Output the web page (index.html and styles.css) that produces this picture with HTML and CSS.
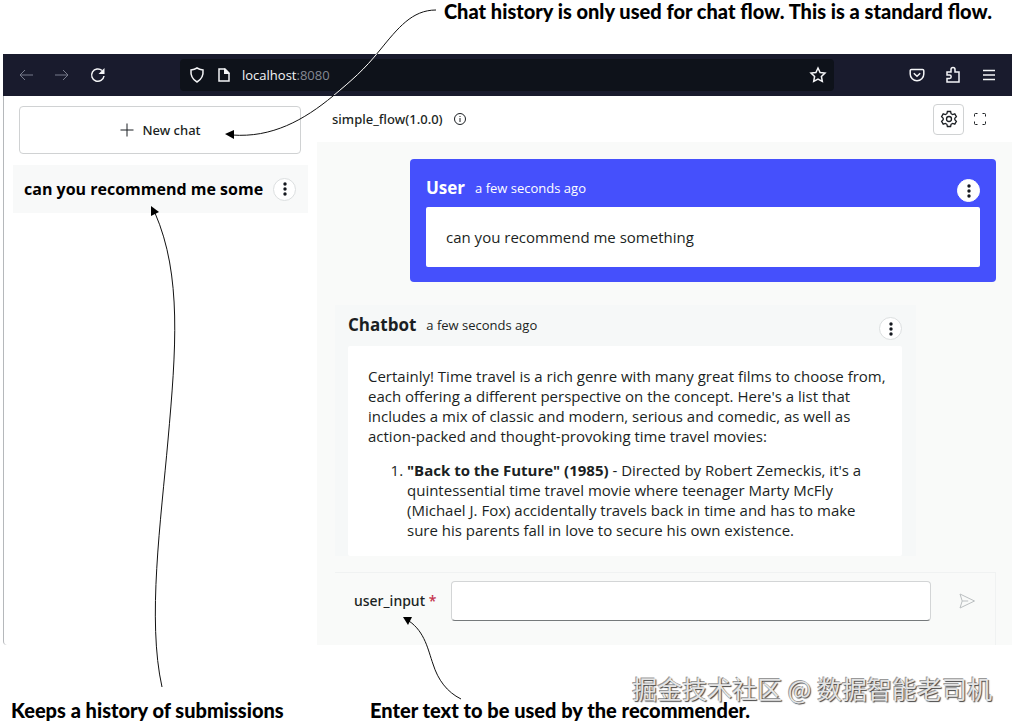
FILE: index.html
```html
<!DOCTYPE html>
<html lang="en">
<head>
    <meta charset="UTF-8">
    <meta name="viewport" content="width=device-width, initial-scale=1.0">
    <title>simple_flow</title>
    <link rel="stylesheet" href="styles.css">
</head>
<body>
    <div class="figure">
        <p class="caption caption-top">Chat history is only used for chat flow. This is a standard flow.</p>

        <div class="window">
            <div class="toolbar">
                <div class="nav-buttons">
                    <button class="tool dim" aria-label="Back"><svg width="18" height="18" viewBox="0 0 18 18"><path d="M16 9H3M8 4L3 9l5 5"/></svg></button>
                    <button class="tool dim" aria-label="Forward"><svg width="18" height="18" viewBox="0 0 18 18"><path d="M2 9h13M10 4l5 5-5 5"/></svg></button>
                    <button class="tool" aria-label="Reload"><svg width="18" height="18" viewBox="0 0 18 18"><path class="thick" d="M15 10a6.2 6.2 0 1 1-2-5.500"/><path class="solid" d="M15.500 2v6h-6z"/></svg></button>
                </div>
                <div class="address">
                    <svg width="18" height="18" viewBox="0 0 18 18"><path class="thick" d="M9 2c2 1.300 4 1.700 6 1.900C15.500 9 13.500 13.500 9 16 4.500 13.500 2.500 9 3 3.900 5 3.700 7 3.300 9 2z"/></svg>
                    <svg width="18" height="18" viewBox="0 0 18 18"><path class="thick" d="M4 3h6l4 4v8H4z"/><path class="solid" d="M9 2l6 6H9z"/></svg>
                    <span class="url">localhost<span class="port">:8080</span></span>
                    <svg class="star" width="18" height="18" viewBox="0 0 18 18"><path class="thick" d="M9 2l2.100 4.500 4.900.6-3.600 3.400.9 4.900L9 13l-4.300 2.400.9-4.900L2 7.100l4.900-.6z"/></svg>
                </div>
                <div class="tool-buttons">
                    <button class="tool" aria-label="Pocket"><svg width="18" height="18" viewBox="0 0 18 18"><path class="thick" d="M3.500 3.500h11a1.300 1.300 0 0 1 1.300 1.300V8a6.800 6.800 0 0 1-13.600 0V4.800a1.300 1.300 0 0 1 1.300-1.300z"/><path class="thick" d="M5.800 7.300L9 10.300l3.200-3"/></svg></button>
                    <button class="tool" aria-label="Extensions"><svg width="18" height="18" viewBox="0 0 18 18"><path class="thick" d="M3 6h4V3.500a2 2 0 0 1 4 0V6h4v10H3v-3.500h2.500a1.700 1.700 0 0 0 0-3.400H3z"/></svg></button>
                    <button class="tool" aria-label="Menu"><svg width="18" height="18" viewBox="0 0 18 18"><path class="thick" d="M3 4.500h12M3 9h12M3 13.500h12"/></svg></button>
                </div>
            </div>

            <div class="content">
                <div class="sidebar">
                    <button class="new-chat">
                        <svg width="16" height="16" viewBox="0 0 16 16"><path d="M8 1.500v13M1.500 8h13"/></svg>
                        New chat
                    </button>
                    <div class="history-item">
                        <span class="history-title">can you recommend me some</span>
                        <button class="more" aria-label="Chat options"><svg width="4" height="14" viewBox="0 0 4 14"><circle cx="2" cy="2" r="1.700"/><circle cx="2" cy="7" r="1.700"/><circle cx="2" cy="12" r="1.700"/></svg></button>
                    </div>
                </div>

                <div class="main">
                    <div class="flow-header">
                        <span class="flow-name">simple_flow(1.0.0)</span>
                        <svg class="info" width="14" height="14" viewBox="0 0 14 14"><circle cx="7" cy="7" r="5.500"/><path d="M7 6v4M7 4v1"/></svg>
                        <button class="settings" aria-label="Settings"><svg width="18" height="18" viewBox="0 0 18 18"><path d="M7.400 1.500h3.200l.5 2.200 1.500.9 2.200-.7 1.600 2.800L14.800 8.200v1.600l1.600 1.500-1.600 2.800-2.200-.7-1.500.9-.5 2.200H7.400l-.5-2.200-1.500-.9-2.200.7-1.600-2.800 1.600-1.500V8.200L1.600 6.700l1.600-2.800 2.200.7 1.500-.9z"/><circle cx="9" cy="9" r="2.500"/></svg></button>
                        <button class="expand" aria-label="Full screen"><svg width="14" height="14" viewBox="0 0 14 14"><path d="M1.500 4.500v-2a1 1 0 0 1 1-1h2M9.500 1.500h2a1 1 0 0 1 1 1v2M12.500 9.500v2a1 1 0 0 1-1 1h-2M4.500 12.500h-2a1 1 0 0 1-1-1v-2"/></svg></button>
                    </div>

                    <div class="messages">
                        <div class="message user">
                            <div class="message-head">
                                <b class="author">User</b>
                                <span class="time">a few seconds ago</span>
                                <button class="more" aria-label="Message options"><svg width="4" height="14" viewBox="0 0 4 14"><circle cx="2" cy="2" r="1.700"/><circle cx="2" cy="7" r="1.700"/><circle cx="2" cy="12" r="1.700"/></svg></button>
                            </div>
                            <div class="message-body">can you recommend me something</div>
                        </div>

                        <div class="message bot">
                            <div class="message-head">
                                <b class="author">Chatbot</b>
                                <span class="time">a few seconds ago</span>
                                <button class="more" aria-label="Message options"><svg width="4" height="14" viewBox="0 0 4 14"><circle cx="2" cy="2" r="1.700"/><circle cx="2" cy="7" r="1.700"/><circle cx="2" cy="12" r="1.700"/></svg></button>
                            </div>
                            <div class="message-body">
                                <p>Certainly! Time travel is a rich genre with many great films to choose from,<br>
                                each offering a different perspective on the concept. Here's a list that<br>
                                includes a mix of classic and modern, serious and comedic, as well as<br>
                                action-packed and thought-provoking time travel movies:</p>
                                <ol>
                                    <li><b>"Back to the Future" (1985)</b> - Directed by Robert Zemeckis, it's a<br>
                                    quintessential time travel movie where teenager Marty McFly<br>
                                    (Michael J. Fox) accidentally travels back in time and has to make<br>
                                    sure his parents fall in love to secure his own existence.</li>
                                </ol>
                            </div>
                        </div>
                    </div>

                    <form class="input-row">
                        <label for="user-input">user_input <span class="required">*</span></label>
                        <input type="text" id="user-input">
                        <button type="button" class="send" aria-label="Send"><svg width="18" height="18" viewBox="0 0 18 18"><path d="M2 2l14.500 7L2 16l2.200-7zM4.200 9h6"/></svg></button>
                    </form>
                </div>
            </div>
        </div>

        <div class="captions-bottom">
            <p class="caption">Keeps a history of submissions</p>
            <p class="caption">Enter text to be used by the recommender.</p>
        </div>

        <!-- callout arrows -->
        <svg class="arrows" width="1012" height="724" viewBox="0 0 1012 724">
            <defs>
                <clipPath id="over-toolbar"><rect x="3" y="54" width="1009" height="41"/></clipPath>
            </defs>
            <path class="line" d="M436 10C412 10 398 28 380 50C364 70 352 80 333 96C304 120 272 138 232 135"/>
            <path class="line light" clip-path="url(#over-toolbar)" d="M436 10C412 10 398 28 380 50C364 70 352 80 333 96C304 120 272 138 232 135"/>
            <path class="head" d="M225 134l9-4v9z"/>
            <path class="line" d="M155 213C182 275 176 350 168 440C161 520 147 620 162 687"/>
            <path class="head" d="M151 206l8 6-8 4z"/>
            <path class="line" d="M409 621C425 632 428 650 433 664C438 680 447 692 461 699"/>
            <path class="head" d="M403 617h9l-4 8z"/>
        </svg>
        <div class="watermark">掘金技术社区 @ 数据智能老司机</div>
    </div>
</body>
</html>
```

FILE: styles.css
```css
* {
    box-sizing: border-box;
}
body {
    margin: 0;
    background: #fff;
    color: #1b1f23;
    font-family: "Open Sans", "Noto Sans", sans-serif;
    font-size: 15px;
    line-height: 20px;
}
button {
    display: flex;
    align-items: center;
    justify-content: center;
    padding: 0;
    border: none;
    background: none;
    color: inherit;
    font: inherit;
    cursor: pointer;
}
svg {
    display: block;
    flex: none;
    fill: none;
    stroke: currentColor;
}
p {
    margin: 0;
}
.figure {
    position: relative;
    overflow: hidden;
}

/* captions */
.caption {
    color: #000;
    font-family: Lato, sans-serif;
    font-size: 20px;
    font-weight: 900;
    line-height: 24px;
    white-space: nowrap;
}
.caption-top {
    height: 54px;
    padding: 0 20px;
    line-height: 22px;
    text-align: right;
}
.captions-bottom {
    display: grid;
    grid-template-columns: 359px 1fr;
    padding: 53px 0 2px 11px;
}

/* browser window */
.window {
    margin-left: 3px;
}
.toolbar {
    display: flex;
    align-items: center;
    height: 42px;
    padding: 5px 14px;
    background: #191b2d;
    color: #f4f5f7;
}
.nav-buttons {
    display: flex;
    gap: 18px;
    width: 163px;
}
.tool {
    width: 18px;
    height: 18px;
}
.dim {
    color: #777b8b;
}
.thick {
    stroke-width: 1.5;
}
.solid {
    fill: currentColor;
    stroke: none;
}
.address {
    display: flex;
    flex: 1;
    align-items: center;
    gap: 9px;
    height: 32px;
    padding: 0 7px 0 8px;
    border-radius: 4px;
    background: #0e121a;
}
.url {
    font-size: 13px;
}
.port {
    color: #858994;
}
.star {
    margin-left: auto;
}
.tool-buttons {
    display: flex;
    justify-content: flex-end;
    gap: 18px;
    width: 164px;
}

/* sidebar */
.content {
    display: flex;
}
.sidebar {
    width: 314px;
    padding: 10px 9px;
    border-left: 1px solid #b5b8bb;
    border-bottom-left-radius: 4px;
}
.new-chat,
.flow-name,
.input-row label {
    font-family: "Noto Sans", sans-serif;
    font-weight: 500;
}
.new-chat {
    gap: 7px;
    width: 282px;
    height: 48px;
    margin: 0 6px 11px;
    border: 1px solid #d0d2d3;
    border-radius: 4px;
    font-size: 13px;
}
.history-item {
    display: flex;
    align-items: center;
    gap: 5px;
    height: 48px;
    padding: 0 12px 0 11px;
    background: #f8f9f9;
}
.history-title {
    flex: 1;
    overflow: hidden;
    color: #000;
    font-size: 16px;
    font-weight: 700;
    line-height: 24px;
    white-space: nowrap;
}
.more {
    flex: none;
    width: 23px;
    height: 23px;
    border: 1px solid #dcdfe0;
    border-radius: 50%;
    background: #fff;
    color: #14181f;
}
.more svg {
    fill: currentColor;
    stroke: none;
}

/* chat panel */
.main {
    flex: 1;
    background: #f9faf9;
}
.flow-header {
    display: flex;
    align-items: center;
    height: 46px;
    padding: 0 25px 0 15px;
    background: #fff;
}
.flow-name {
    font-size: 13px;
}
.info {
    margin-left: 10px;
}
.settings {
    width: 31px;
    height: 31px;
    margin-left: auto;
    border: 1px solid #d0d2d3;
    border-radius: 4px;
}
.settings svg {
    stroke-width: 1.3;
}
.expand {
    width: 14px;
    height: 14px;
    margin-left: 9px;
}
.messages {
    display: flex;
    flex-direction: column;
    gap: 23px;
    padding: 17px 16px 16px 18px;
}
.message-head {
    display: flex;
    align-items: center;
    gap: 10px;
}
.message-head .more {
    align-self: flex-end;
    margin-left: auto;
}
.author {
    font-size: 17px;
    line-height: 24px;
}
.time {
    font-size: 13px;
}
.message-body {
    padding: 20px 10px 16px 20px;
    border-radius: 2px;
    background: #fff;
}
.user {
    margin-left: 75px;
    padding: 14px 16px 15px;
    border-radius: 4px;
    background: #4550fc;
}
.user .message-head {
    height: 34px;
    padding-bottom: 5px;
    color: #fff;
}
.user .message-body {
    padding: 20px;
}
.user .more {
    border-color: #fff;
}
.bot {
    margin-right: 80px;
    padding: 0 14px 0 13px;
    background: #f6f8f8;
}
.bot .message-head {
    height: 41px;
    padding: 5px 0 6px;
}
.bot ol {
    margin: 14px 0 0;
    padding-left: 39px;
}

/* input row */
.input-row {
    display: flex;
    align-items: center;
    height: 73px;
    margin: 0 16px 0 18px;
    padding: 0 12px 16px 19px;
    border-top: 1px solid #f0f2f2;
    border-right: 1px solid #f0f2f2;
}
.input-row label {
    width: 97px;
    font-size: 14px;
}
.required {
    color: #c4314b;
}
.input-row input {
    flex: 1;
    min-width: 0;
    height: 40px;
    padding: 0 12px;
    border: 1px solid #d3d5d6;
    border-bottom-color: #75797b;
    border-radius: 4px;
    background: #fff;
    font: inherit;
}
.send {
    width: 32px;
    height: 32px;
    margin-left: 20px;
    color: #bbbfc1;
}

/* drawn over the figure */
.arrows {
    position: absolute;
    top: 0;
    left: 0;
    pointer-events: none;
}
.line {
    stroke: #111;
}
.light {
    stroke: #fff;
}
.head {
    fill: #000;
    stroke: none;
}
.watermark {
    position: absolute;
    right: 20px;
    bottom: 18px;
    color: #e4e4e4;
    font-family: "Noto Sans CJK SC", sans-serif;
    font-size: 25px;
    line-height: 36px;
    text-shadow: 1px 1px 1px #444, -1px -1px 0 #999;
    white-space: nowrap;
}
```
